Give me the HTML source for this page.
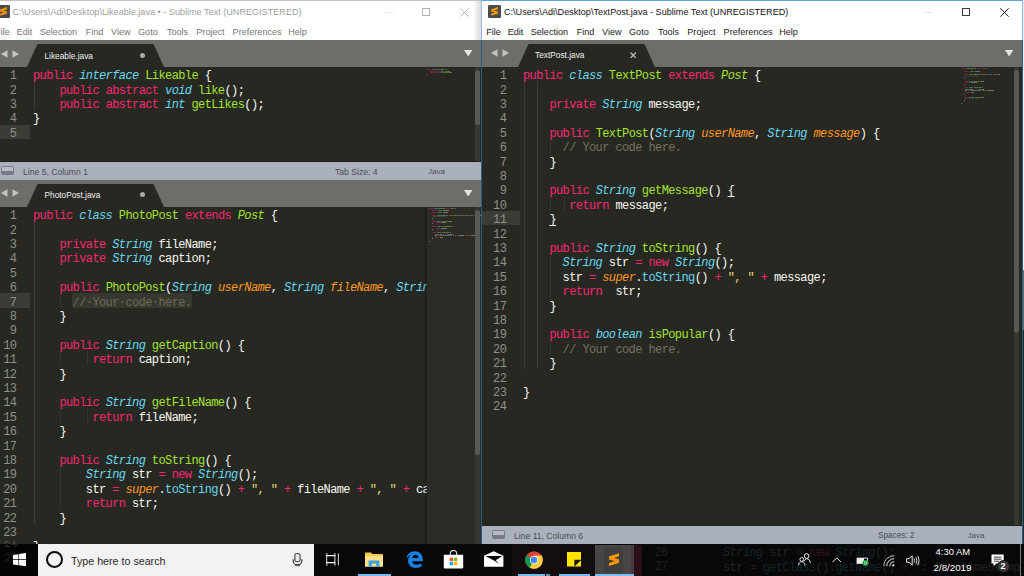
<!DOCTYPE html>
<html><head><meta charset="utf-8"><title>Sublime Text</title>
<style>
html,body{margin:0;padding:0}
body{width:1024px;height:576px;overflow:hidden;background:#272822;position:relative;font-family:"Liberation Sans",sans-serif}
.abs{position:absolute}
div,span,i,svg{box-sizing:border-box}
.white{position:absolute;background:#fff}
.title{position:absolute;top:6px;font-size:9.1px;line-height:12px;white-space:pre}
.mi{position:absolute;top:26.1px;font-size:9.1px;line-height:12px;white-space:pre}
.tabbar{position:absolute;height:27px;background:#6d6e69}
.tab{position:absolute}
.tabtxt{position:absolute;font-size:8.3px;line-height:12px;color:#f2f2f2;white-space:pre}
.status{position:absolute;height:19px;background:#abb1bc;border-top:1px solid #1f201b;font-size:8.6px;color:#4a4d55}
.status span{position:absolute;top:3.5px;line-height:12px;white-space:pre}
.pane{position:absolute;overflow:hidden;background:#272822;font-family:"Liberation Mono",monospace;font-size:12px;letter-spacing:-0.6px;color:#f8f8f2}
.ln{position:absolute;left:0;height:14.4px;line-height:14.4px;text-align:right;color:#8f908a;white-space:pre;padding-top:2.2px}
.cl{position:absolute;height:14.4px;line-height:14.4px;white-space:pre;padding-top:2.2px}
.ghl{position:absolute;left:0;height:14.4px;background:#3b3c36}
.guide{position:absolute;width:1px;background:#35362f}
.ga{background:#3b3c36}
.k{color:#f92672}.t{color:#66d9ef;font-style:italic}.t2{color:#66d9ef}.g{color:#a6e22e}.gi{color:#a6e22e;font-style:italic}
.o{color:#fd971f;font-style:italic}.s{color:#e6db74}.c{color:#75715e}
.u{text-decoration:underline;text-decoration-skip-ink:none;text-underline-offset:2.2px;text-decoration-thickness:1px}
.sel{color:#6e6a59}
.selbg{position:absolute;height:14.4px;background:#373830;border-radius:2px}
.mm i{position:absolute;height:1px;opacity:.5}
.tb{position:absolute;left:0;top:544px;width:1024px;height:32px;background:#080808}
.ghost{position:absolute;font-family:"Liberation Mono",monospace;font-size:12px;letter-spacing:-0.6px;line-height:14.4px;white-space:pre}
</style></head>
<body>
<div class="white" style="left:0;top:0;width:481px;height:40px"></div>
<div class="abs" style="left:0;top:0;width:481px;height:1px;background:#c4c4c4"></div>
<svg class="abs" style="left:-3.2px;top:5px" width="13" height="13" viewBox="0 0 16 16"><rect width="16" height="16" rx="1.6" fill="#4b4b4b"/><g transform="translate(3.9 2.6) scale(.78 .84)"><path d="M0 3.4 10.6 0V3L0 6.4ZM0 9.8 10.6 6.4V9.4L0 12.8Z" fill="#ff9c00"/><path d="M0 3.4 10.6 6.4V9.4L0 6.4Z" fill="#f59300"/></g></svg>
<span class="title" style="left:12.5px;color:#9e9e9e">C:\Users\Adi\Desktop\Likeable.java • - Sublime Text (UNREGISTERED)</span>
<span class="mi" style="left:-4.8px;color:#767676">File</span><span class="mi" style="left:16.7px;color:#767676">Edit</span><span class="mi" style="left:39.7px;color:#767676">Selection</span><span class="mi" style="left:85.7px;color:#767676">Find</span><span class="mi" style="left:111.0px;color:#767676">View</span><span class="mi" style="left:138.0px;color:#767676">Goto</span><span class="mi" style="left:166.9px;color:#767676">Tools</span><span class="mi" style="left:196.3px;color:#767676">Project</span><span class="mi" style="left:232.6px;color:#767676">Preferences</span><span class="mi" style="left:288.2px;color:#767676">Help</span>
<div class="abs" style="left:385.5px;top:11.5px;width:8px;height:1px;background:#ececec"></div>
<div class="abs" style="left:422px;top:8px;width:8px;height:8px;border:1px solid #b4b4b4"></div>
<svg class="abs" style="left:460px;top:8px" width="9" height="9" viewBox="0 0 9 9"><path d="M.3.3 8.7 8.7M8.7.3.3 8.7" stroke="#b0b0b0" stroke-width="0.9"/></svg>
<div class="abs" style="left:473px;top:1px;width:8px;height:39px;background:linear-gradient(90deg,rgba(0,0,0,0),rgba(0,0,0,.14))"></div>
<div class="tabbar" style="left:0;top:40px;width:481px"></div>
<svg class="abs" style="left:0.5px;top:49.6px" width="20" height="8" viewBox="0 0 20 8"><path d="M0 4 L6.5 0.3 V7.7Z M18 4 L11.5 0.3 V7.7Z" fill="#c4c5c0"/></svg>
<svg class="abs" style="left:27px;top:44px" width="137" height="23" viewBox="0 0 137 23"><path d="M0 23 L10.0 0.9 Q10.4 0 11.4 0 L125.6 0 Q126.6 0 127.0 0.9 L137 23 Z" fill="#272822"/></svg><span class="tabtxt" style="left:44.5px;top:50px">Likeable.java</span><div class="abs" style="left:139.5px;top:52.7px;width:5.6px;height:5.6px;border-radius:50%;background:#a9a9a5"></div>
<svg class="abs" style="left:464.4px;top:50px" width="8.4" height="6.6" viewBox="0 0 8.4 6.6"><path d="M0 0H8.4L4.2 6.6Z" fill="#e4e4e0"/></svg>
<div class="pane" style="left:0px;top:67px;width:481px;height:94px">
<div class="ghl" style="top:57.6px;width:29.5px"></div>

<div class="guide ga" style="left:33.9px;top:14.4px;height:28.8px"></div>
<div class="ln" style="top:0.0px;width:16.4px">1</div>
<div class="cl" style="top:0.0px;left:33.0px"><span class="k">public</span> <span class="t">interface</span> <span class="g">Likeable</span> {</div>
<div class="ln" style="top:14.4px;width:16.4px">2</div>
<div class="cl" style="top:14.4px;left:33.0px">    <span class="k">public</span> <span class="k">abstract</span> <span class="t">void</span> <span class="g">like</span>();</div>
<div class="ln" style="top:28.8px;width:16.4px">3</div>
<div class="cl" style="top:28.8px;left:33.0px">    <span class="k">public</span> <span class="k">abstract</span> <span class="t">int</span> <span class="g">getLikes</span>();</div>
<div class="ln" style="top:43.2px;width:16.4px">4</div>
<div class="cl" style="top:43.2px;left:33.0px">}</div>
<div class="ln" style="top:57.6px;width:16.4px">5</div>
<div class="mm"><i style="left:427.0px;top:2.0px;width:4.3px;background:#c4205c"></i><i style="left:432.0px;top:2.0px;width:6.5px;background:#4fa8ba"></i><i style="left:439.2px;top:2.0px;width:5.8px;background:#82b125"></i><i style="left:445.7px;top:2.0px;width:0.7px;background:#b9b9b4"></i><i style="left:429.9px;top:3.5px;width:4.3px;background:#c4205c"></i><i style="left:434.9px;top:3.5px;width:5.8px;background:#c4205c"></i><i style="left:441.4px;top:3.5px;width:2.9px;background:#4fa8ba"></i><i style="left:445.0px;top:3.5px;width:2.9px;background:#82b125"></i><i style="left:447.9px;top:3.5px;width:2.2px;background:#b9b9b4"></i><i style="left:429.9px;top:5.0px;width:4.3px;background:#c4205c"></i><i style="left:434.9px;top:5.0px;width:5.8px;background:#c4205c"></i><i style="left:441.4px;top:5.0px;width:2.2px;background:#4fa8ba"></i><i style="left:444.3px;top:5.0px;width:5.8px;background:#82b125"></i><i style="left:450.0px;top:5.0px;width:2.2px;background:#b9b9b4"></i><i style="left:427.0px;top:6.5px;width:0.7px;background:#b9b9b4"></i></div><div class="abs" style="left:475px;top:0;width:5.3px;height:94px;background:#363731"></div><div class="abs" style="left:474.6px;top:3px;width:5.2px;height:55px;background:#585954;border-radius:2.5px"></div>
</div>
<div class="status" style="left:0;top:161px;width:481px"><span style="left:23px">Line 5, Column 1</span><span style="left:335px">Tab Size: 4</span><span style="left:428px;font-size:8px">Java</span></div>
<div class="abs" style="left:1.2px;top:166.3px;width:12.6px;height:9.2px;border:1px solid #787b84;border-radius:1.5px;background:linear-gradient(#b7bcc8 0,#b7bcc8 62%,#787b84 62%)"></div>
<div class="tabbar" style="left:0;top:180px;width:481px"></div>
<svg class="abs" style="left:0.5px;top:188.9px" width="20" height="8" viewBox="0 0 20 8"><path d="M0 4 L6.5 0.3 V7.7Z M18 4 L11.5 0.3 V7.7Z" fill="#c4c5c0"/></svg>
<svg class="abs" style="left:27px;top:184px" width="137" height="23" viewBox="0 0 137 23"><path d="M0 23 L10.0 0.9 Q10.4 0 11.4 0 L125.6 0 Q126.6 0 127.0 0.9 L137 23 Z" fill="#272822"/></svg><span class="tabtxt" style="left:44.5px;top:189px">PhotoPost.java</span><div class="abs" style="left:139.5px;top:191.9px;width:5.6px;height:5.6px;border-radius:50%;background:#a9a9a5"></div>
<svg class="abs" style="left:464.4px;top:189.7px" width="8.4" height="6.6" viewBox="0 0 8.4 6.6"><path d="M0 0H8.4L4.2 6.6Z" fill="#e4e4e0"/></svg>
<div class="pane" style="left:0px;top:207px;width:481px;height:369px">
<div class="ghl" style="top:86.4px;width:29.5px"></div>
<div class="selbg" style="left:72.3px;top:86.4px;width:119.6px"></div>
<div class="guide ga" style="left:33.9px;top:14.4px;height:302.4px"></div>
<div class="guide" style="left:60.3px;top:86.4px;height:14.4px"></div>
<div class="guide" style="left:60.3px;top:144.0px;height:14.4px"></div>
<div class="guide" style="left:86.7px;top:144.0px;height:14.4px"></div>
<div class="guide" style="left:60.3px;top:201.6px;height:14.4px"></div>
<div class="guide" style="left:86.7px;top:201.6px;height:14.4px"></div>
<div class="guide" style="left:60.3px;top:259.2px;height:43.2px"></div>
<div class="ln" style="top:0.0px;width:16.4px">1</div>
<div class="cl" style="top:0.0px;left:33.0px"><span class="k">public</span> <span class="t">class</span> <span class="g">PhotoPost</span> <span class="k">extends</span> <span class="gi">Post</span> {</div>
<div class="ln" style="top:14.4px;width:16.4px">2</div>
<div class="ln" style="top:28.8px;width:16.4px">3</div>
<div class="cl" style="top:28.8px;left:33.0px">    <span class="k">private</span> <span class="t">String</span> fileName;</div>
<div class="ln" style="top:43.2px;width:16.4px">4</div>
<div class="cl" style="top:43.2px;left:33.0px">    <span class="k">private</span> <span class="t">String</span> caption;</div>
<div class="ln" style="top:57.6px;width:16.4px">5</div>
<div class="ln" style="top:72.0px;width:16.4px">6</div>
<div class="cl" style="top:72.0px;left:33.0px">    <span class="k">public</span> <span class="g">PhotoPost</span>(<span class="t">String</span> <span class="o">userName</span>, <span class="t">String</span> <span class="o">fileName</span>, <span class="t">String</span> <span class="o">caption</span>) {</div>
<div class="ln" style="top:86.4px;width:16.4px">7</div>
<div class="cl" style="top:86.4px;left:33.0px">      <span class="sel">//·Your·code·here.</span></div>
<div class="ln" style="top:100.8px;width:16.4px">8</div>
<div class="cl" style="top:100.8px;left:33.0px">    }</div>
<div class="ln" style="top:115.2px;width:16.4px">9</div>
<div class="ln" style="top:129.6px;width:16.4px">10</div>
<div class="cl" style="top:129.6px;left:33.0px">    <span class="k">public</span> <span class="t">String</span> <span class="g">getCaption</span>() {</div>
<div class="ln" style="top:144.0px;width:16.4px">11</div>
<div class="cl" style="top:144.0px;left:33.0px">         <span class="k">return</span> caption;</div>
<div class="ln" style="top:158.4px;width:16.4px">12</div>
<div class="cl" style="top:158.4px;left:33.0px">    }</div>
<div class="ln" style="top:172.8px;width:16.4px">13</div>
<div class="ln" style="top:187.2px;width:16.4px">14</div>
<div class="cl" style="top:187.2px;left:33.0px">    <span class="k">public</span> <span class="t">String</span> <span class="g">getFileName</span>() {</div>
<div class="ln" style="top:201.6px;width:16.4px">15</div>
<div class="cl" style="top:201.6px;left:33.0px">         <span class="k">return</span> fileName;</div>
<div class="ln" style="top:216.0px;width:16.4px">16</div>
<div class="cl" style="top:216.0px;left:33.0px">    }</div>
<div class="ln" style="top:230.4px;width:16.4px">17</div>
<div class="ln" style="top:244.8px;width:16.4px">18</div>
<div class="cl" style="top:244.8px;left:33.0px">    <span class="k">public</span> <span class="t">String</span> <span class="g">toString</span>() {</div>
<div class="ln" style="top:259.2px;width:16.4px">19</div>
<div class="cl" style="top:259.2px;left:33.0px">        <span class="t">String</span> str <span class="k">=</span> <span class="k">new</span> <span class="t">String</span>();</div>
<div class="ln" style="top:273.6px;width:16.4px">20</div>
<div class="cl" style="top:273.6px;left:33.0px">        str <span class="k">=</span> <span class="o">super</span>.<span class="t2">toString</span>() <span class="k">+</span> <span class="s">", "</span> <span class="k">+</span> fileName <span class="k">+</span> <span class="s">", "</span> <span class="k">+</span> caption;</div>
<div class="ln" style="top:288.0px;width:16.4px">21</div>
<div class="cl" style="top:288.0px;left:33.0px">        <span class="k">return</span> str;</div>
<div class="ln" style="top:302.4px;width:16.4px">22</div>
<div class="cl" style="top:302.4px;left:33.0px">    }</div>
<div class="ln" style="top:316.8px;width:16.4px">23</div>
<div class="ln" style="top:331.2px;width:16.4px;color:#55564f">24</div>
<div class="cl" style="top:331.2px;left:33.0px">}</div>
<div class="ln" style="top:345.6px;width:16.4px">25</div>
<div class="ln" style="top:360.0px;width:16.4px">26</div>
<div class="abs" style="left:426.7px;top:0;width:54.3px;height:369px;background:#2b2c26;box-shadow:-2px 0 2px rgba(0,0,0,.25)"></div><div class="mm"><i style="left:429.0px;top:0.5px;width:4.3px;background:#c4205c"></i><i style="left:434.0px;top:0.5px;width:3.6px;background:#4fa8ba"></i><i style="left:438.4px;top:0.5px;width:6.5px;background:#82b125"></i><i style="left:445.6px;top:0.5px;width:5.0px;background:#c4205c"></i><i style="left:451.3px;top:0.5px;width:2.9px;background:#82b125"></i><i style="left:454.9px;top:0.5px;width:0.7px;background:#b9b9b4"></i><i style="left:431.9px;top:3.4px;width:5.0px;background:#c4205c"></i><i style="left:437.6px;top:3.4px;width:4.3px;background:#4fa8ba"></i><i style="left:442.7px;top:3.4px;width:6.5px;background:#b9b9b4"></i><i style="left:431.9px;top:4.8px;width:5.0px;background:#c4205c"></i><i style="left:437.6px;top:4.8px;width:4.3px;background:#4fa8ba"></i><i style="left:442.7px;top:4.8px;width:5.8px;background:#b9b9b4"></i><i style="left:431.9px;top:7.8px;width:4.3px;background:#c4205c"></i><i style="left:436.9px;top:7.8px;width:6.5px;background:#82b125"></i><i style="left:443.4px;top:7.8px;width:0.7px;background:#b9b9b4"></i><i style="left:444.1px;top:7.8px;width:4.3px;background:#4fa8ba"></i><i style="left:449.2px;top:7.8px;width:5.8px;background:#c77819"></i><i style="left:454.9px;top:7.8px;width:0.7px;background:#b9b9b4"></i><i style="left:456.4px;top:7.8px;width:4.3px;background:#4fa8ba"></i><i style="left:461.4px;top:7.8px;width:5.8px;background:#c77819"></i><i style="left:467.2px;top:7.8px;width:0.7px;background:#b9b9b4"></i><i style="left:468.6px;top:7.8px;width:4.3px;background:#4fa8ba"></i><i style="left:473.6px;top:7.8px;width:5.0px;background:#c77819"></i><i style="left:478.7px;top:7.8px;width:0.7px;background:#b9b9b4"></i><i style="left:480.1px;top:7.8px;width:0.7px;background:#b9b9b4"></i><i style="left:433.3px;top:9.2px;width:13.0px;background:#5c594a"></i><i style="left:431.9px;top:10.7px;width:0.7px;background:#b9b9b4"></i><i style="left:431.9px;top:13.5px;width:4.3px;background:#c4205c"></i><i style="left:436.9px;top:13.5px;width:4.3px;background:#4fa8ba"></i><i style="left:442.0px;top:13.5px;width:7.2px;background:#82b125"></i><i style="left:449.2px;top:13.5px;width:1.4px;background:#b9b9b4"></i><i style="left:451.3px;top:13.5px;width:0.7px;background:#b9b9b4"></i><i style="left:435.5px;top:15.0px;width:4.3px;background:#c4205c"></i><i style="left:440.5px;top:15.0px;width:5.8px;background:#b9b9b4"></i><i style="left:431.9px;top:16.4px;width:0.7px;background:#b9b9b4"></i><i style="left:431.9px;top:19.3px;width:4.3px;background:#c4205c"></i><i style="left:436.9px;top:19.3px;width:4.3px;background:#4fa8ba"></i><i style="left:442.0px;top:19.3px;width:7.9px;background:#82b125"></i><i style="left:449.9px;top:19.3px;width:1.4px;background:#b9b9b4"></i><i style="left:452.0px;top:19.3px;width:0.7px;background:#b9b9b4"></i><i style="left:435.5px;top:20.8px;width:4.3px;background:#c4205c"></i><i style="left:440.5px;top:20.8px;width:6.5px;background:#b9b9b4"></i><i style="left:431.9px;top:22.2px;width:0.7px;background:#b9b9b4"></i><i style="left:431.9px;top:25.1px;width:4.3px;background:#c4205c"></i><i style="left:436.9px;top:25.1px;width:4.3px;background:#4fa8ba"></i><i style="left:442.0px;top:25.1px;width:5.8px;background:#82b125"></i><i style="left:447.7px;top:25.1px;width:1.4px;background:#b9b9b4"></i><i style="left:449.9px;top:25.1px;width:0.7px;background:#b9b9b4"></i><i style="left:434.8px;top:26.6px;width:4.3px;background:#4fa8ba"></i><i style="left:439.8px;top:26.6px;width:2.2px;background:#b9b9b4"></i><i style="left:442.7px;top:26.6px;width:0.7px;background:#c4205c"></i><i style="left:444.1px;top:26.6px;width:2.2px;background:#c4205c"></i><i style="left:447.0px;top:26.6px;width:4.3px;background:#4fa8ba"></i><i style="left:451.3px;top:26.6px;width:2.2px;background:#b9b9b4"></i><i style="left:434.8px;top:28.1px;width:2.2px;background:#b9b9b4"></i><i style="left:437.6px;top:28.1px;width:0.7px;background:#c4205c"></i><i style="left:439.1px;top:28.1px;width:3.6px;background:#c77819"></i><i style="left:442.7px;top:28.1px;width:0.7px;background:#b9b9b4"></i><i style="left:443.4px;top:28.1px;width:5.8px;background:#4fa8ba"></i><i style="left:449.2px;top:28.1px;width:1.4px;background:#b9b9b4"></i><i style="left:451.3px;top:28.1px;width:0.7px;background:#c4205c"></i><i style="left:452.8px;top:28.1px;width:1.4px;background:#b3ab5b"></i><i style="left:454.9px;top:28.1px;width:0.7px;background:#b3ab5b"></i><i style="left:456.4px;top:28.1px;width:0.7px;background:#c4205c"></i><i style="left:457.8px;top:28.1px;width:5.8px;background:#b9b9b4"></i><i style="left:464.3px;top:28.1px;width:0.7px;background:#c4205c"></i><i style="left:465.7px;top:28.1px;width:1.4px;background:#b3ab5b"></i><i style="left:467.9px;top:28.1px;width:0.7px;background:#b3ab5b"></i><i style="left:469.3px;top:28.1px;width:0.7px;background:#c4205c"></i><i style="left:470.8px;top:28.1px;width:5.8px;background:#b9b9b4"></i><i style="left:434.8px;top:29.5px;width:4.3px;background:#c4205c"></i><i style="left:439.8px;top:29.5px;width:2.9px;background:#b9b9b4"></i><i style="left:431.9px;top:30.9px;width:0.7px;background:#b9b9b4"></i><i style="left:429.0px;top:33.9px;width:0.7px;background:#b9b9b4"></i></div><div class="abs" style="left:475px;top:0;width:5.3px;height:369px;background:#363731"></div><div class="abs" style="left:474.6px;top:3px;width:5.2px;height:245px;background:#585954;border-radius:2.5px"></div>
</div>
<div class="white" style="left:481px;top:0;width:542px;height:40px"></div>
<div class="abs" style="left:481px;top:0;width:542px;height:544px;border:1px solid rgba(50,135,220,.55);border-top-color:#5fa3e0;border-bottom:0;pointer-events:none;z-index:5"></div>
<svg class="abs" style="left:488px;top:5px" width="13" height="13" viewBox="0 0 16 16"><rect width="16" height="16" rx="1.6" fill="#4b4b4b"/><g transform="translate(3.9 2.6) scale(.78 .84)"><path d="M0 3.4 10.6 0V3L0 6.4ZM0 9.8 10.6 6.4V9.4L0 12.8Z" fill="#ff9c00"/><path d="M0 3.4 10.6 6.4V9.4L0 6.4Z" fill="#f59300"/></g></svg>
<span class="title" style="left:504px;color:#111">C:\Users\Adi\Desktop\TextPost.java - Sublime Text (UNREGISTERED)</span>
<span class="mi" style="left:486.2px;color:#1a1a1a">File</span><span class="mi" style="left:507.7px;color:#1a1a1a">Edit</span><span class="mi" style="left:530.7px;color:#1a1a1a">Selection</span><span class="mi" style="left:576.7px;color:#1a1a1a">Find</span><span class="mi" style="left:602.0px;color:#1a1a1a">View</span><span class="mi" style="left:629.0px;color:#1a1a1a">Goto</span><span class="mi" style="left:657.9px;color:#1a1a1a">Tools</span><span class="mi" style="left:687.3px;color:#1a1a1a">Project</span><span class="mi" style="left:723.6px;color:#1a1a1a">Preferences</span><span class="mi" style="left:779.2px;color:#1a1a1a">Help</span>
<div class="abs" style="left:925.3px;top:11.5px;width:8px;height:1px;background:#e6e6e6"></div>
<div class="abs" style="left:962px;top:8px;width:8px;height:8px;border:1px solid #3a3a3a"></div>
<svg class="abs" style="left:1000px;top:8px" width="9" height="9" viewBox="0 0 9 9"><path d="M.3.3 8.7 8.7M8.7.3.3 8.7" stroke="#111" stroke-width="0.9"/></svg>
<div class="tabbar" style="left:482px;top:40px;width:540px"></div>
<svg class="abs" style="left:491px;top:49.3px" width="20" height="8" viewBox="0 0 20 8"><path d="M0 4 L6.5 0.3 V7.7Z M18 4 L11.5 0.3 V7.7Z" fill="#c4c5c0"/></svg>
<svg class="abs" style="left:517.6px;top:44px" width="137" height="23" viewBox="0 0 137 23"><path d="M0 23 L10.0 0.9 Q10.4 0 11.4 0 L125.6 0 Q126.6 0 127.0 0.9 L137 23 Z" fill="#272822"/></svg><span class="tabtxt" style="left:535.1px;top:49.2px">TextPost.java</span><svg class="abs" style="left:629.8000000000001px;top:51.7px" width="6.4" height="6.4" viewBox="0 0 6.4 6.4"><path d="M.5.5 5.9 5.9M5.9.5.5 5.9" stroke="#b4b4b0" stroke-width="1.4"/></svg>
<svg class="abs" style="left:1004.6px;top:50px" width="8.4" height="6.6" viewBox="0 0 8.4 6.6"><path d="M0 0H8.4L4.2 6.6Z" fill="#e4e4e0"/></svg>
<div class="pane" style="left:482px;top:67px;width:540px;height:458px">
<div class="ghl" style="top:144.0px;width:37.5px"></div>

<div class="guide ga" style="left:41.9px;top:14.4px;height:288.0px"></div>
<div class="guide ga" style="left:55.1px;top:14.4px;height:288.0px"></div>
<div class="guide" style="left:68.3px;top:72.0px;height:14.4px"></div>
<div class="guide" style="left:68.3px;top:129.6px;height:14.4px"></div>
<div class="guide" style="left:81.5px;top:129.6px;height:14.4px"></div>
<div class="guide" style="left:68.3px;top:187.2px;height:43.2px"></div>
<div class="guide" style="left:68.3px;top:273.6px;height:14.4px"></div>
<div class="ln" style="top:0.0px;width:24.3px">1</div>
<div class="cl" style="top:0.0px;left:41.0px"><span class="k">public</span> <span class="t">class</span> <span class="g">TextPost</span> <span class="k">extends</span> <span class="gi">Post</span> {</div>
<div class="ln" style="top:14.4px;width:24.3px">2</div>
<div class="ln" style="top:28.8px;width:24.3px">3</div>
<div class="cl" style="top:28.8px;left:41.0px">    <span class="k">private</span> <span class="t">String</span> message;</div>
<div class="ln" style="top:43.2px;width:24.3px">4</div>
<div class="ln" style="top:57.6px;width:24.3px">5</div>
<div class="cl" style="top:57.6px;left:41.0px">    <span class="k">public</span> <span class="g">TextPost</span>(<span class="t">String</span> <span class="o">userName</span>, <span class="t">String</span> <span class="o">message</span>) {</div>
<div class="ln" style="top:72.0px;width:24.3px">6</div>
<div class="cl" style="top:72.0px;left:41.0px">      <span class="c">// Your code here.</span></div>
<div class="ln" style="top:86.4px;width:24.3px">7</div>
<div class="cl" style="top:86.4px;left:41.0px">    }</div>
<div class="ln" style="top:100.8px;width:24.3px">8</div>
<div class="ln" style="top:115.2px;width:24.3px">9</div>
<div class="cl" style="top:115.2px;left:41.0px">    <span class="k">public</span> <span class="t">String</span> <span class="g">getMessage</span>() <span class="u">{</span></div>
<div class="ln" style="top:129.6px;width:24.3px">10</div>
<div class="cl" style="top:129.6px;left:41.0px">       <span class="k">return</span> message;</div>
<div class="ln" style="top:144.0px;width:24.3px">11</div>
<div class="cl" style="top:144.0px;left:41.0px">    <span class="u">}</span></div>
<div class="ln" style="top:158.4px;width:24.3px">12</div>
<div class="ln" style="top:172.8px;width:24.3px">13</div>
<div class="cl" style="top:172.8px;left:41.0px">    <span class="k">public</span> <span class="t">String</span> <span class="g">toString</span>() {</div>
<div class="ln" style="top:187.2px;width:24.3px">14</div>
<div class="cl" style="top:187.2px;left:41.0px">      <span class="t">String</span> str <span class="k">=</span> <span class="k">new</span> <span class="t">String</span>();</div>
<div class="ln" style="top:201.6px;width:24.3px">15</div>
<div class="cl" style="top:201.6px;left:41.0px">      str <span class="k">=</span> <span class="o">super</span>.<span class="t2">toString</span>() <span class="k">+</span> <span class="s">", "</span> <span class="k">+</span> message;</div>
<div class="ln" style="top:216.0px;width:24.3px">16</div>
<div class="cl" style="top:216.0px;left:41.0px">      <span class="k">return</span>  str;</div>
<div class="ln" style="top:230.4px;width:24.3px">17</div>
<div class="cl" style="top:230.4px;left:41.0px">    }</div>
<div class="ln" style="top:244.8px;width:24.3px">18</div>
<div class="ln" style="top:259.2px;width:24.3px">19</div>
<div class="cl" style="top:259.2px;left:41.0px">    <span class="k">public</span> <span class="t">boolean</span> <span class="g">isPopular</span>() {</div>
<div class="ln" style="top:273.6px;width:24.3px">20</div>
<div class="cl" style="top:273.6px;left:41.0px">      <span class="c">// Your code here.</span></div>
<div class="ln" style="top:288.0px;width:24.3px">21</div>
<div class="cl" style="top:288.0px;left:41.0px">    }</div>
<div class="ln" style="top:302.4px;width:24.3px">22</div>
<div class="ln" style="top:316.8px;width:24.3px">23</div>
<div class="cl" style="top:316.8px;left:41.0px">}</div>
<div class="ln" style="top:331.2px;width:24.3px">24</div>
<div class="mm"><i style="left:479.0px;top:1.0px;width:4.3px;background:#c4205c"></i><i style="left:484.0px;top:1.0px;width:3.6px;background:#4fa8ba"></i><i style="left:488.4px;top:1.0px;width:5.8px;background:#82b125"></i><i style="left:494.8px;top:1.0px;width:5.0px;background:#c4205c"></i><i style="left:500.6px;top:1.0px;width:2.9px;background:#82b125"></i><i style="left:504.2px;top:1.0px;width:0.7px;background:#b9b9b4"></i><i style="left:481.9px;top:4.2px;width:5.0px;background:#c4205c"></i><i style="left:487.6px;top:4.2px;width:4.3px;background:#4fa8ba"></i><i style="left:492.7px;top:4.2px;width:5.8px;background:#b9b9b4"></i><i style="left:481.9px;top:7.4px;width:4.3px;background:#c4205c"></i><i style="left:486.9px;top:7.4px;width:5.8px;background:#82b125"></i><i style="left:492.7px;top:7.4px;width:0.7px;background:#b9b9b4"></i><i style="left:493.4px;top:7.4px;width:4.3px;background:#4fa8ba"></i><i style="left:498.4px;top:7.4px;width:5.8px;background:#c77819"></i><i style="left:504.2px;top:7.4px;width:0.7px;background:#b9b9b4"></i><i style="left:505.6px;top:7.4px;width:4.3px;background:#4fa8ba"></i><i style="left:510.7px;top:7.4px;width:5.0px;background:#c77819"></i><i style="left:515.7px;top:7.4px;width:0.7px;background:#b9b9b4"></i><i style="left:517.2px;top:7.4px;width:0.7px;background:#b9b9b4"></i><i style="left:483.3px;top:9.0px;width:1.4px;background:#5c594a"></i><i style="left:485.5px;top:9.0px;width:2.9px;background:#5c594a"></i><i style="left:489.1px;top:9.0px;width:2.9px;background:#5c594a"></i><i style="left:492.7px;top:9.0px;width:3.6px;background:#5c594a"></i><i style="left:481.9px;top:10.6px;width:0.7px;background:#b9b9b4"></i><i style="left:481.9px;top:13.8px;width:4.3px;background:#c4205c"></i><i style="left:486.9px;top:13.8px;width:4.3px;background:#4fa8ba"></i><i style="left:492.0px;top:13.8px;width:7.2px;background:#82b125"></i><i style="left:499.2px;top:13.8px;width:1.4px;background:#b9b9b4"></i><i style="left:501.3px;top:13.8px;width:0.7px;background:#b9b9b4"></i><i style="left:484.0px;top:15.4px;width:4.3px;background:#c4205c"></i><i style="left:489.1px;top:15.4px;width:5.8px;background:#b9b9b4"></i><i style="left:481.9px;top:17.0px;width:0.7px;background:#b9b9b4"></i><i style="left:481.9px;top:20.2px;width:4.3px;background:#c4205c"></i><i style="left:486.9px;top:20.2px;width:4.3px;background:#4fa8ba"></i><i style="left:492.0px;top:20.2px;width:5.8px;background:#82b125"></i><i style="left:497.7px;top:20.2px;width:1.4px;background:#b9b9b4"></i><i style="left:499.9px;top:20.2px;width:0.7px;background:#b9b9b4"></i><i style="left:483.3px;top:21.8px;width:4.3px;background:#4fa8ba"></i><i style="left:488.4px;top:21.8px;width:2.2px;background:#b9b9b4"></i><i style="left:491.2px;top:21.8px;width:0.7px;background:#c4205c"></i><i style="left:492.7px;top:21.8px;width:2.2px;background:#c4205c"></i><i style="left:495.6px;top:21.8px;width:4.3px;background:#4fa8ba"></i><i style="left:499.9px;top:21.8px;width:2.2px;background:#b9b9b4"></i><i style="left:483.3px;top:23.4px;width:2.2px;background:#b9b9b4"></i><i style="left:486.2px;top:23.4px;width:0.7px;background:#c4205c"></i><i style="left:487.6px;top:23.4px;width:3.6px;background:#c77819"></i><i style="left:491.2px;top:23.4px;width:0.7px;background:#b9b9b4"></i><i style="left:492.0px;top:23.4px;width:5.8px;background:#4fa8ba"></i><i style="left:497.7px;top:23.4px;width:1.4px;background:#b9b9b4"></i><i style="left:499.9px;top:23.4px;width:0.7px;background:#c4205c"></i><i style="left:501.3px;top:23.4px;width:1.4px;background:#b3ab5b"></i><i style="left:503.5px;top:23.4px;width:0.7px;background:#b3ab5b"></i><i style="left:504.9px;top:23.4px;width:0.7px;background:#c4205c"></i><i style="left:506.4px;top:23.4px;width:5.8px;background:#b9b9b4"></i><i style="left:483.3px;top:25.0px;width:4.3px;background:#c4205c"></i><i style="left:489.1px;top:25.0px;width:2.9px;background:#b9b9b4"></i><i style="left:481.9px;top:26.6px;width:0.7px;background:#b9b9b4"></i><i style="left:481.9px;top:29.8px;width:4.3px;background:#c4205c"></i><i style="left:486.9px;top:29.8px;width:5.0px;background:#4fa8ba"></i><i style="left:492.7px;top:29.8px;width:6.5px;background:#82b125"></i><i style="left:499.2px;top:29.8px;width:1.4px;background:#b9b9b4"></i><i style="left:501.3px;top:29.8px;width:0.7px;background:#b9b9b4"></i><i style="left:483.3px;top:31.4px;width:1.4px;background:#5c594a"></i><i style="left:485.5px;top:31.4px;width:2.9px;background:#5c594a"></i><i style="left:489.1px;top:31.4px;width:2.9px;background:#5c594a"></i><i style="left:492.7px;top:31.4px;width:3.6px;background:#5c594a"></i><i style="left:481.9px;top:33.0px;width:0.7px;background:#b9b9b4"></i><i style="left:479.0px;top:36.2px;width:0.7px;background:#b9b9b4"></i></div><div class="abs" style="left:532px;top:0;width:5px;height:459px;background:#363731"></div><div class="abs" style="left:532px;top:3px;width:5px;height:263px;background:#585954;border-radius:2.4px"></div>
</div>
<div class="status" style="left:482px;top:525px;width:540px"><span style="left:32px">Line 11, Column 6</span><span style="left:396px;font-size:8.2px">Spaces: 2</span><span style="left:485.6px;font-size:8px">Java</span></div>
<div class="abs" style="left:492px;top:530.3px;width:12.6px;height:9.2px;border:1px solid #787b84;border-radius:1.5px;background:linear-gradient(#b7bcc8 0,#b7bcc8 62%,#787b84 62%)"></div>
<div class="abs" style="left:1023px;top:0;width:1px;height:270px;background:#e8eef5"></div>
<div class="abs" style="left:1023px;top:270px;width:1px;height:60px;background:#6d6e69"></div>
<div class="tb">
 <!-- faint content showing through the translucent taskbar -->
 <div class="abs" style="left:0;top:0;width:38px;height:32px;background:#050505"></div>
 <div class="abs" style="left:512px;top:0;width:83px;height:32px;background:#140d0d"></div>
 <div class="abs" style="left:595px;top:1px;width:35.5px;height:31px;background:#484545"></div>
 <div class="abs" style="left:604px;top:2.8px;width:19px;height:26.6px;background:#3f3d3d"></div>
 <div class="abs" style="left:631px;top:1px;width:3px;height:31px;background:#47393e"></div>
 <div class="abs" style="left:634px;top:1px;width:7.5px;height:31px;background:#2a0f1a"></div>
 <div class="ghost" style="left:4px;top:-7px;color:#26272a">24</div>
 <div class="ghost" style="left:4px;top:8px;color:#1d1e20">25</div>
 <div class="ghost" style="left:654.5px;top:2px;color:#1d1e20">26</div>
 <div class="ghost" style="left:654.5px;top:16.4px;color:#1d1e20">27</div>
 <div class="ghost" style="left:723px;top:2.3px;color:#14232a"><i>String</i> <span style="color:#222220">str</span> <span style="color:#33111b">= new</span> <i>String</i><span style="color:#222220">();</span></div>
 <div class="ghost" style="left:723px;top:16.6px;color:#222220">str <span style="color:#33111b">=</span> <span style="color:#14232a">getClass</span>().<span style="color:#14232a">getName</span>() <span style="color:#33111b">+</span> <span style="color:#262417">": "</span> <span style="color:#33111b">+</span> timeStamp</div>

 <!-- start -->
 <svg class="abs" style="left:12.7px;top:9.2px" width="13.4" height="13.4" viewBox="0 0 14 14"><path d="M0 2 5.7 1.2V6.6H0ZM6.4 1.1 14 0V6.6H6.4ZM0 7.3H5.7V12.8L0 12ZM6.4 7.3H14V14L6.4 12.9Z" fill="#fff"/></svg>
 <!-- search box -->
 <div class="abs" style="left:38px;top:0;width:275.5px;height:32px;background:#f2f2f2"></div>
 <div class="abs" style="left:45.5px;top:7.1px;width:17.4px;height:17.4px;border:2.5px solid #0a0a0a;border-radius:50%"></div>
 <span class="abs" style="left:71px;top:10.6px;font-size:10.7px;line-height:13px;color:#2b2b2b;white-space:pre">Type here to search</span>
 <!-- mic -->
 <svg class="abs" style="left:292px;top:9px" width="11" height="13.5" viewBox="0 0 11 13.5"><rect x="2.9" y=".6" width="5.2" height="8" rx="1.5" fill="#e9e9e9" stroke="#2a2a2a" stroke-width="1"/><path d="M1.1 6.2v1.3a4.4 4.4 0 0 0 8.8 0V6.2" fill="none" stroke="#2a2a2a" stroke-width="1.1"/><path d="M3 12.6h5" fill="none" stroke="#555" stroke-width="1"/></svg>
 <!-- task view -->
 <svg class="abs" style="left:325px;top:9.4px" width="15" height="13" viewBox="0 0 15 13"><path d="M1.7.4V12.4M9.9.4V12.4M13.4.4V12.4" stroke="#dcdcdc" stroke-width="1" fill="none"/><path d="M1.2 2.7H10.4M1.2 9.6H10.4" stroke="#f4f4f4" stroke-width="1.2" fill="none"/><path d="M1.2.8H3M8.6.8H10.4M1.2 12H3M8.6 12H10.4" stroke="#8a8a8a" stroke-width=".8" fill="none"/></svg>
 <!-- file explorer -->
 <svg class="abs" style="left:365px;top:8px" width="18" height="15" viewBox="0 0 18 15"><path d="M0 1.2Q0 .5.7.5H6l1.4 1.6H17.3Q18 2.1 18 2.8V14Q18 14.6 17.3 14.6H.7Q0 14.6 0 14Z" fill="#f5c84c"/><path d="M0 4h18v10q0 .6-.7.6H.7Q0 14.6 0 14Z" fill="#fbe08a"/><path d="M3.6 14.6V8.6h10.8v6h-3.2v-3.2H6.8v3.2Z" fill="#3aa0e8"/></svg>
 <div class="abs" style="left:358px;top:29.6px;width:32.5px;height:2.4px;background:#76b9ed"></div>
 <!-- edge -->
 <svg class="abs" style="left:405.5px;top:7px" width="17" height="17" viewBox="0 0 17 17"><path d="M.4 7.6C1 3.2 4.3.3 8.7.3c4.7 0 8 3.3 8 8.2v1.7H6.2c.2 2.2 1.9 3.5 4.4 3.5 1.8 0 3.4-.5 4.9-1.4v3.3c-1.6.9-3.5 1.3-5.6 1.3-4.8 0-7.8-2.9-7.8-7.2 0-2.4 1.1-4.5 3.1-5.8C3 4.6 1.3 5.7.4 7.6ZM6.3 6.9h6.1c0-2-1.1-3.2-2.9-3.2-1.7 0-2.9 1.2-3.2 3.2Z" fill="#1a80e2"/></svg>
 <!-- store -->
 <svg class="abs" style="left:443px;top:6px" width="21" height="19" viewBox="0 0 21 19"><path d="M7.3 5V3.6a3.2 3.2 0 0 1 6.4 0V5" fill="none" stroke="#e8e8e8" stroke-width="1.1"/><path d="M.8 4.8H20.2V17.2Q20.2 18.5 18.9 18.5H2.1Q.8 18.5.8 17.2Z" fill="#fff"/><rect x="6.7" y="7.7" width="3.4" height="3.4" fill="#f25022"/><rect x="10.9" y="7.7" width="3.4" height="3.4" fill="#7fba00"/><rect x="6.7" y="11.9" width="3.4" height="3.4" fill="#00a4ef"/><rect x="10.9" y="11.9" width="3.4" height="3.4" fill="#ffb900"/></svg>
 <!-- mail -->
 <svg class="abs" style="left:484px;top:7px" width="20" height="16" viewBox="0 0 20 16"><path d="M0 4.7 9.7.2 19.4 4.7V15.8H0Z" fill="#fff"/><path d="M1.3 5.1H18.2L11.8 9.3 15.3 13.1 10.4 9.7Z" fill="#0c0c0c"/></svg>
 <!-- chrome -->
 <svg class="abs" style="left:525px;top:6.5px" width="18" height="18" viewBox="0 0 18 18"><circle cx="9" cy="9" r="8.8" fill="#db4437"/><path d="M9 9 1.38 4.6A8.8 8.8 0 0 0 4.6 16.62L9 9Z" fill="#0f9d58"/><path d="M9 9 4.6 16.62A8.8 8.8 0 0 0 9 17.8 8.8 8.8 0 0 0 16.62 4.6H9Z" fill="#ffcd40"/><path d="M9 9 4.6 16.62 1.38 4.6Z" fill="#0f9d58"/><circle cx="9" cy="9" r="4.1" fill="#f1f1f1"/><circle cx="9" cy="9" r="3.2" fill="#4285f4"/></svg>
 <div class="abs" style="left:518px;top:29.6px;width:27px;height:2.4px;background:#76b9ed"></div>
 <div class="abs" style="left:546px;top:29.6px;width:4px;height:2.4px;background:#5d93bd"></div>
 <!-- sticky notes -->
 <svg class="abs" style="left:566.7px;top:8.4px" width="14.5" height="14.5" viewBox="0 0 14.5 14.5"><rect width="14.5" height="14.5" fill="#ffe500"/><path d="M7.4 7.8H14.5L7.4 14.5Z" fill="#1a1010"/></svg>
 <div class="abs" style="left:558.5px;top:29.6px;width:31.5px;height:2.4px;background:#76b9ed"></div>
 <!-- sublime -->
 <svg class="abs" style="left:608.7px;top:9.3px" width="10.8" height="13" viewBox="0 0 10.6 12.8"><path d="M0 3.4 10.6 0V3L0 6.4ZM0 9.8 10.6 6.4V9.4L0 12.8Z" fill="#ff9c00"/><path d="M0 3.4 10.6 6.4V9.4L0 6.4Z" fill="#f59300"/></svg>
 <div class="abs" style="left:595px;top:30px;width:38.8px;height:2px;background:#7cc0f5"></div>

 <!-- tray -->
 <svg class="abs" style="left:798px;top:9px" width="13" height="13" viewBox="0 0 13 13"><circle cx="8.6" cy="3" r="2.3" fill="none" stroke="#e6e6e6" stroke-width="1"/><circle cx="3.8" cy="6.4" r="1.9" fill="none" stroke="#e6e6e6" stroke-width="1"/><path d="M.6 12.4C.6 10 2 8.7 3.8 8.7S7 10 7 12.4M6.2 8.2C6.8 6.6 7.6 5.8 8.6 5.8 10.6 5.8 12.2 7.2 12.2 9.8" fill="none" stroke="#e6e6e6" stroke-width="1"/></svg>
 <svg class="abs" style="left:831.5px;top:13px" width="9.6" height="6" viewBox="0 0 9.6 6"><path d="M.4 5.3 4.8.8 9.2 5.3" fill="none" stroke="#ededed" stroke-width="1"/></svg>
 <svg class="abs" style="left:855.5px;top:12.5px" width="14" height="10" viewBox="0 0 14 10"><rect x=".6" y=".7" width="7.4" height="6.2" fill="#ececec"/><path d="M8 1.1H11.6V7" fill="none" stroke="#e4e4e4" stroke-width="1"/><circle cx="9.5" cy="5.9" r="3" fill="#16a03c"/><circle cx="9.5" cy="5.9" r="1.3" fill="none" stroke="#d9f5e0" stroke-width=".7"/></svg>
 <svg class="abs" style="left:882.5px;top:10.5px" width="12" height="12" viewBox="0 0 12 12"><g fill="none" stroke-width="1"><path d="M.7 11A10.3 10.3 0 0 1 11.3.7" stroke="#b9b9b9"/><path d="M3.7 11.2A7.4 7.4 0 0 1 11.3 3.7" stroke="#e8e8e8"/><path d="M6.8 11.4A4.4 4.4 0 0 1 11.3 6.8" stroke="#e8e8e8"/></g><circle cx="10.3" cy="10.3" r="1.1" fill="#f0f0f0"/></svg>
 <svg class="abs" style="left:906px;top:10.5px" width="14" height="11" viewBox="0 0 14 11"><path d="M.6 3.7H3L6.2.8V10.2L3 7.3H.6Z" fill="none" stroke="#f0f0f0" stroke-width="1"/><path d="M8 3.6Q9.2 5.5 8 7.4M9.9 2.2Q12 5.5 9.9 8.8M11.8.8Q14.6 5.5 11.8 10.2" fill="none" stroke="#f0f0f0" stroke-width=".9"/></svg>
 <span class="abs" style="left:935.6px;top:1.9px;font-size:9.4px;line-height:12px;color:#fff;white-space:pre">4:30 AM</span>
 <span class="abs" style="left:933.5px;top:17.8px;font-size:9.75px;line-height:12px;color:#fff;white-space:pre">2/8/2019</span>
 <svg class="abs" style="left:991px;top:9.5px" width="14" height="13" viewBox="0 0 14 13"><path d="M.5.5H12.7V9.5H5.2L2.6 12.2V9.5H.5Z" fill="#fff"/><path d="M2.8 3.2H10.4M2.8 5.2H10.4M2.8 7.2H8" stroke="#0c0c0c" stroke-width=".8"/></svg>
 <div class="abs" style="left:996.6px;top:15.5px;width:13px;height:13px;border-radius:50%;background:#3a3a3a;border:1px solid #101010;color:#fff;font-size:9px;line-height:11px;text-align:center;font-weight:bold">2</div>
 <div class="abs" style="left:1020px;top:0;width:1px;height:32px;background:#7a7a7a"></div>
</div>

</body></html>
